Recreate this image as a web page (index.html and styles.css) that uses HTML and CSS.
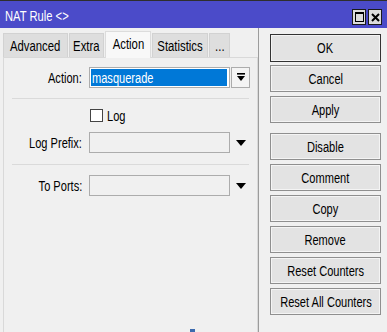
FILE: index.html
```html
<!DOCTYPE html>
<html>
<head>
<meta charset="utf-8">
<link rel="stylesheet" href="styles.css">
</head>
<body>
<div class="window">
  <div class="titlebar">
    <span class="title"><span class="nx nx-left">NAT Rule &lt;&gt;</span></span>
    <div class="tb-buttons">
      <span class="tb-btn"><svg width="9" height="10" viewBox="0 0 9 10"><rect x="0.5" y="0.5" width="8" height="9" fill="none" stroke="#000" stroke-width="1"/><rect x="0" y="0" width="9" height="2" fill="#000"/></svg></span>
      <span class="tb-btn"><svg width="9" height="9" viewBox="0 0 9 9"><path d="M1 1 L8 8 M8 1 L1 8" stroke="#000" stroke-width="2"/></svg></span>
    </div>
  </div>
  <div class="main">
    <div class="left">
      <div class="tabs">
        <span class="tab tab-adv"><span class="nx">Advanced</span></span>
        <span class="tab tab-extra"><span class="nx">Extra</span></span>
        <span class="tab tab-action active"><span class="nx">Action</span></span>
        <span class="tab tab-stats"><span class="nx">Statistics</span></span>
        <span class="tab tab-more"><span class="nx">...</span></span>
      </div>
      <div class="panel">
        <div class="row row-action">
          <span class="lbl"><span class="nx nx-right">Action:</span></span>
          <div class="field field-select"><span class="hl"><span class="nx nx-left">masquerade</span></span></div>
          <span class="dd-btn"><svg width="8" height="9" viewBox="0 0 8 9"><rect x="0" y="0" width="8" height="1.6" fill="#000"/><polygon points="0,3 8,3 4,8" fill="#000"/></svg></span>
        </div>
        <div class="sep"></div>
        <div class="check-row">
          <span class="checkbox"></span><span class="check-text"><span class="nx nx-left">Log</span></span>
        </div>
        <div class="row row-prefix">
          <span class="lbl"><span class="nx nx-right">Log Prefix:</span></span>
          <div class="field"></div>
          <span class="arrow"><svg width="10" height="6" viewBox="0 0 10 6"><polygon points="0,0 10,0 5,6" fill="#000"/></svg></span>
        </div>
        <div class="sep sep-2"></div>
        <div class="row row-ports">
          <span class="lbl"><span class="nx nx-right">To Ports:</span></span>
          <div class="field"></div>
          <span class="arrow"><svg width="10" height="6" viewBox="0 0 10 6"><polygon points="0,0 10,0 5,6" fill="#000"/></svg></span>
        </div>
      </div>
    </div>
    <div class="right">
      <button class="btn btn-default"><span class="nx">OK</span></button>
      <button class="btn"><span class="nx">Cancel</span></button>
      <button class="btn"><span class="nx">Apply</span></button>
      <button class="btn btn-group"><span class="nx">Disable</span></button>
      <button class="btn"><span class="nx">Comment</span></button>
      <button class="btn"><span class="nx">Copy</span></button>
      <button class="btn"><span class="nx">Remove</span></button>
      <button class="btn"><span class="nx">Reset Counters</span></button>
      <button class="btn"><span class="nx">Reset All Counters</span></button>
    </div>
  </div>
  <span class="cursor-mark"></span>
</div>
</body>
</html>
```

FILE: styles.css
```css
* { box-sizing: border-box; }
html, body {
  margin: 0;
  padding: 0;
  background: #f0f0f0;
}
body {
  font-family: "Liberation Sans", Arial, sans-serif;
  font-size: 14px;
  color: #000;
}
.nx {
  display: inline-block;
  white-space: nowrap;
  transform: scaleX(0.79);
  transform-origin: center;
}
.nx-left { transform-origin: left center; }
.nx-right { transform-origin: right center; }
.window {
  position: relative;
  width: 387px;
  height: 332px;
  overflow: hidden;
  background: #f0f0f0;
}
.titlebar {
  height: 28px;
  border-top: 1px solid #2e2e2e;
  background: #4b4bc9;
  display: flex;
  align-items: center;
  justify-content: space-between;
  padding: 0 5px 0 5px;
}
.title {
  color: #fff;
  font-size: 14px;
  margin-top: 2px;
}
.title .nx { transform: scaleX(0.8); }
.tb-buttons {
  display: flex;
  gap: 2px;
  margin-top: 5px;
}
.tb-btn {
  width: 14px;
  height: 16px;
  background: #dcdcdc;
  border: 1px solid #1a1a1a;
  display: flex;
  align-items: center;
  justify-content: center;
}
.main {
  display: flex;
  height: 304px;
}
.left {
  width: 259px;
  padding-left: 3px;
  border-right: 1px solid #9c9c9c;
  display: flex;
  flex-direction: column;
}
.tabs {
  height: 29px;
  display: flex;
  align-items: flex-end;
  position: relative;
  z-index: 1;
}
.tab {
  height: 24px;
  display: flex;
  align-items: center;
  justify-content: center;
  background: #dedede;
  border: 1px solid #d2d2d2;
  border-bottom: none;
  margin-right: 1px;
}
.tab .nx { transform: scaleX(0.81); }
.tab-adv { width: 65px; }
.tab-extra { width: 35px; }
.tab-action { width: 46px; }
.tab-stats { width: 56px; }
.tab-more { width: 21px; margin-right: 0; }
.tab.active {
  height: 27px;
  margin-bottom: -1px;
  background: #f8f8f8;
  border-color: #dcdcdc;
  padding-bottom: 3px;
}
.panel {
  flex: 1;
  border-top: 1px solid #d9d9d9;
  border-left: 1px solid #d9d9d9;
  border-right: 1px solid #d9d9d9;
  padding-top: 9px;
}
.row {
  display: flex;
  align-items: center;
  height: 21px;
}
.lbl {
  width: 78px;
  text-align: right;
  margin-right: 7px;
}
.field {
  width: 141px;
  height: 21px;
  border: 1px solid #acacac;
  background: #f0f0f0;
}
.field-select {
  background: #fff;
  padding: 1px 2px 1px 1px;
}
.hl {
  display: flex;
  align-items: center;
  height: 100%;
  background: #0078d7;
  color: #fff;
  padding-left: 1px;
}
.dd-btn {
  width: 19px;
  height: 21px;
  margin-left: 1px;
  border: 1px solid #acacac;
  background: #f4f4f4;
  display: flex;
  align-items: center;
  justify-content: center;
}
.arrow {
  margin-left: 6px;
  display: flex;
  align-items: center;
}
.sep {
  width: 237px;
  height: 1px;
  background: #dadada;
  margin: 10px 0 0 8px;
}
.check-row {
  display: flex;
  align-items: center;
  height: 13px;
  margin-top: 10px;
  padding-left: 86px;
}
.checkbox {
  width: 13px;
  height: 13px;
  border: 1px solid #444;
  background: #fff;
}
.check-text {
  margin-left: 4px;
}
.row-prefix { margin-top: 10px; }
.sep-2 { margin-top: 11px; }
.row-ports { margin-top: 10px; }
.right {
  padding: 6px 0 0 11px;
  display: flex;
  flex-direction: column;
  gap: 4px;
}
.btn {
  width: 111px;
  height: 27px;
  font-family: inherit;
  font-size: 14px;
  color: #000;
  background: #e3e3e3;
  border: 1px solid #8f8f8f;
  box-shadow: inset 0 0 0 1px #f4f4f4;
  padding: 0;
  margin: 0;
  display: flex;
  align-items: center;
  justify-content: center;
}
.btn-default {
  height: 28px;
  border-color: #333;
  margin-bottom: -1px;
}
.btn-group {
  margin-top: 6px;
}
.cursor-mark {
  position: absolute;
  left: 190px;
  top: 329px;
  width: 5px;
  height: 3px;
  background: #3c6aae;
}
```
